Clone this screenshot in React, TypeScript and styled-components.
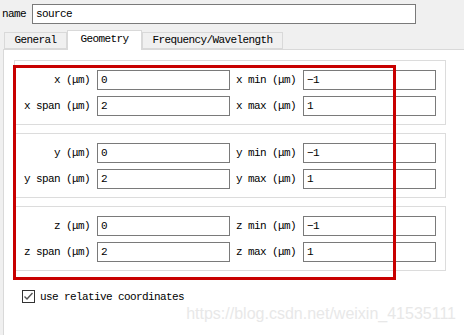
import React from "react";
import styled, { createGlobalStyle } from "styled-components";

const GlobalStyle = createGlobalStyle`
  html, body {
    margin: 0;
    padding: 0;
    background: #f0f0f0;
  }
`;

const Page = styled.div`
  position: relative;
  width: 464px;
  height: 335px;
  overflow: hidden;
  background: #f0f0f0;
  font-family: "Liberation Mono", "DejaVu Sans Mono", monospace;
  font-size: 11px;
  letter-spacing: -0.6px;
  color: #000;
`;

const NameRow = styled.div`
  display: flex;
  align-items: center;
  gap: 6px;
  padding: 4px 0 0 2px;
`;

const Label = styled.span`
  white-space: nowrap;
`;

const Field = styled.input<{ $width: number }>`
  box-sizing: border-box;
  width: ${(p) => p.$width}px;
  height: 20px;
  margin: 0;
  padding: 0 0 0 3px;
  border: 1px solid #7a7a7a;
  border-radius: 0;
  background: #fff;
  font: inherit;
  letter-spacing: inherit;
  color: #000;
  outline: none;
`;

const TabBar = styled.div`
  display: flex;
  align-items: flex-end;
  height: 19px;
  margin-top: 6px;
  padding-left: 4px;
  position: relative;
  z-index: 1;
`;

const Tab = styled.div<{ $active?: boolean; $width: number }>`
  box-sizing: border-box;
  width: ${(p) => p.$width}px;
  height: ${(p) => (p.$active ? 20 : 17)}px;
  margin-bottom: ${(p) => (p.$active ? -1 : 0)}px;
  border: 1px solid #d9d9d9;
  border-bottom: ${(p) => (p.$active ? "none" : "1px solid #d9d9d9")};
  background: ${(p) => (p.$active ? "#fff" : "#f0f0f0")};
  display: flex;
  align-items: center;
  justify-content: center;
  padding-bottom: ${(p) => (p.$active ? 3 : 1)}px;
  white-space: nowrap;
`;

const Panel = styled.div`
  position: relative;
  margin-left: 3px;
  height: 300px;
  border-left: 1px solid #d9d9d9;
  border-top: 1px solid #d9d9d9;
  background: #fff;
  padding: 10px 0 0 10px;
  box-sizing: border-box;
`;

const Groups = styled.div`
  display: flex;
  flex-direction: column;
  gap: 8px;
`;

const Group = styled.div`
  box-sizing: border-box;
  width: 432px;
  height: 65px;
  border: 1px solid #dcdcdc;
  padding-top: 9px;
  display: grid;
  grid-template-columns: 82px 133px 73px 133px;
  grid-auto-rows: 20px;
  row-gap: 6px;
  align-content: start;
`;

const FieldLabel = styled.div<{ $align: "left" | "right" }>`
  display: flex;
  align-items: center;
  justify-content: ${(p) => (p.$align === "right" ? "flex-end" : "flex-start")};
  padding: ${(p) => (p.$align === "right" ? "0 7px 0 0" : "0 0 0 6px")};
  white-space: nowrap;
`;

const CheckRow = styled.label`
  display: flex;
  align-items: center;
  gap: 5px;
  margin: 19px 0 0 8px;
`;

const CheckBox = styled.span`
  box-sizing: border-box;
  width: 13px;
  height: 13px;
  border: 1px solid #333;
  background: #fff;
  display: flex;
  align-items: center;
  justify-content: center;
`;

const Annotation = styled.div`
  position: absolute;
  left: 9px;
  top: 15px;
  width: 383px;
  height: 215px;
  box-sizing: border-box;
  border: 3px solid #c80000;
  pointer-events: none;
`;

const Watermark = styled.div`
  position: absolute;
  right: 8px;
  top: 305px;
  font-family: "Liberation Sans", Arial, sans-serif;
  font-size: 16px;
  letter-spacing: 0;
  color: #e8e8e8;
  white-space: nowrap;
`;

const axes = ["x", "y", "z"];

export default function App() {
  return (
    <Page>
      <GlobalStyle />
      <NameRow>
        <Label>name</Label>
        <Field $width={384} readOnly value="source" />
      </NameRow>
      <TabBar>
        <Tab $width={63}>General</Tab>
        <Tab $width={75} $active>Geometry</Tab>
        <Tab $width={141}>Frequency/Wavelength</Tab>
      </TabBar>
      <Panel>
        <Groups>
          {axes.map((a) => (
            <Group key={a}>
              <FieldLabel $align="right">{a} (μm)</FieldLabel>
              <Field $width={133} readOnly value="0" />
              <FieldLabel $align="left">{a} min (μm)</FieldLabel>
              <Field $width={133} readOnly value="−1" />
              <FieldLabel $align="right">{a} span (μm)</FieldLabel>
              <Field $width={133} readOnly value="2" />
              <FieldLabel $align="left">{a} max (μm)</FieldLabel>
              <Field $width={133} readOnly value="1" />
            </Group>
          ))}
        </Groups>
        <CheckRow>
          <CheckBox>
            <svg width="11" height="11" viewBox="0 0 11 11">
              <polyline points="1.5,5.5 4,8 9.5,2" fill="none" stroke="#555" strokeWidth="1.4" />
            </svg>
          </CheckBox>
          use relative coordinates
        </CheckRow>
        <Annotation />
      </Panel>
      <Watermark>https://blog.csdn.net/weixin_41535111</Watermark>
    </Page>
  );
}
